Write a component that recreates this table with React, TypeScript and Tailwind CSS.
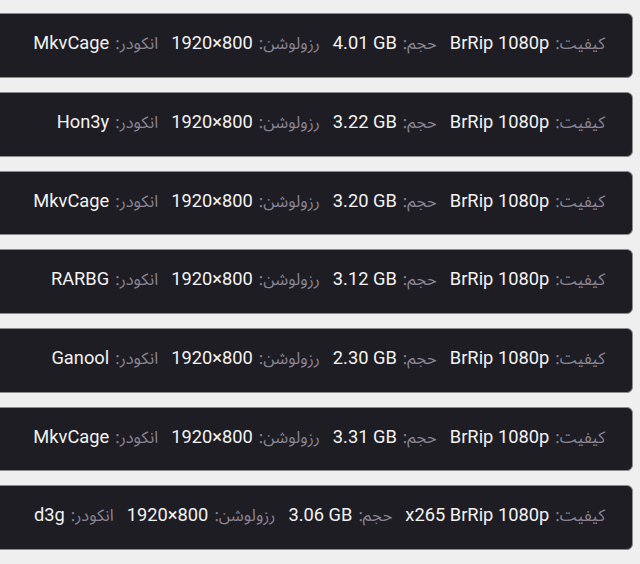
import React from "react";

type Row = { q: string; size: string; res: string; enc: string };

const rows: Row[] = [
  { q: "BrRip 1080p", size: "4.01 GB", res: "1920×800", enc: "MkvCage" },
  { q: "BrRip 1080p", size: "3.22 GB", res: "1920×800", enc: "Hon3y" },
  { q: "BrRip 1080p", size: "3.20 GB", res: "1920×800", enc: "MkvCage" },
  { q: "BrRip 1080p", size: "3.12 GB", res: "1920×800", enc: "RARBG" },
  { q: "BrRip 1080p", size: "2.30 GB", res: "1920×800", enc: "Ganool" },
  { q: "BrRip 1080p", size: "3.31 GB", res: "1920×800", enc: "MkvCage" },
  { q: "x265 BrRip 1080p", size: "3.06 GB", res: "1920×800", enc: "d3g" },
];

function Item({ label, value }: { label: string; value: string }) {
  return (
    <span className="flex items-baseline gap-[6px] whitespace-nowrap">
      <span
        className="text-[#8a8595] text-[16.5px]"
        style={{ fontFamily: "'Noto Sans Arabic UI', 'Noto Sans Arabic', 'DejaVu Sans', sans-serif" }}
      >
        {label}:
      </span>
      <span
        dir="ltr"
        className="text-[#f2f2f2] text-[18.3px]"
        style={{ fontFamily: "Roboto, 'Liberation Sans', sans-serif" }}
      >
        {value}
      </span>
    </span>
  );
}

function Card({ row }: { row?: Row }) {
  return (
    <div
      dir="rtl"
      className="h-[64.67px] shrink-0 -ml-[20px] mr-[7px] rounded-[6px] border border-[#8c8c8c] bg-[#1e1d23] flex items-center justify-start overflow-hidden"
    >
      {row && (
        <div className="flex items-baseline gap-[13px] pr-[27px] pb-[5px] shrink-0">
          <Item label="کیفیت" value={row.q} />
          <Item label="حجم" value={row.size} />
          <Item label="رزولوشن" value={row.res} />
          <Item label="انکودر" value={row.enc} />
        </div>
      )}
    </div>
  );
}

export default function App() {
  return (
    <div className="w-[640px] h-[564px] overflow-hidden bg-[#efefef]">
      <div className="flex flex-col gap-[14px] -mt-[65.33px]">
        <Card />
        {rows.map((r, i) => (
          <Card key={i} row={r} />
        ))}
        <Card />
      </div>
    </div>
  );
}
